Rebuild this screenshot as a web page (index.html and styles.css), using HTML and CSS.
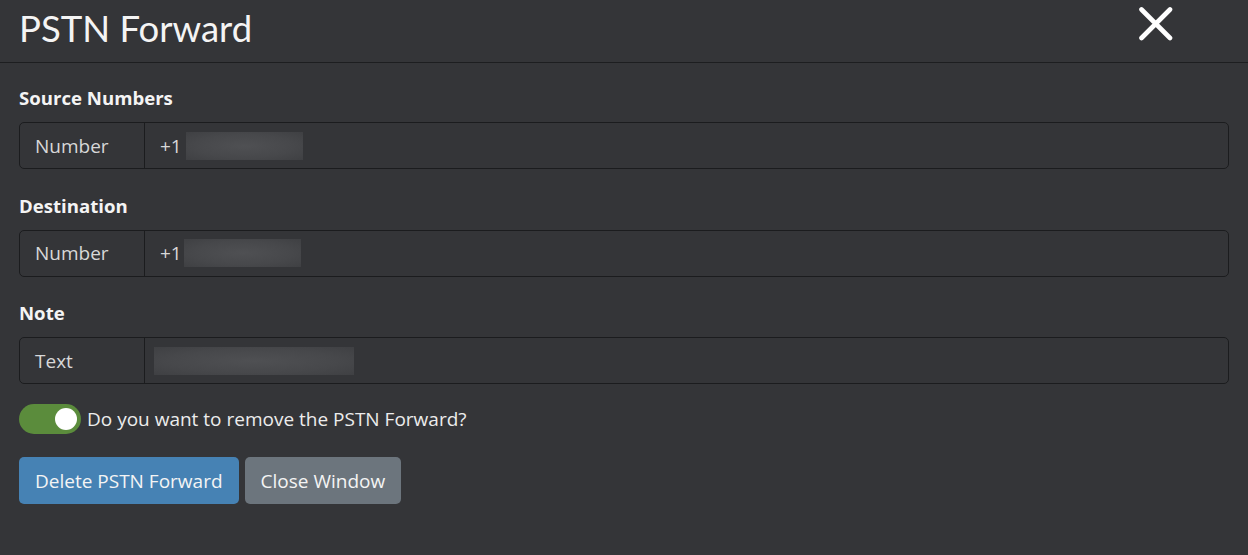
FILE: index.html
```html
<!DOCTYPE html>
<html lang="en">
<head>
<meta charset="utf-8">
<title>PSTN Forward</title>
<link rel="stylesheet" href="styles.css">
</head>
<body>
<div class="modal">
  <header class="modal-header">
    <h1 class="modal-title">PSTN Forward</h1>
    <button class="close-btn" aria-label="Close">
      <svg width="34" height="34" viewBox="0 0 34 34"><path d="M2.5 2.5 L31 31 M31 2.5 L2.5 31" stroke="#fff" stroke-width="4.6" stroke-linecap="round"/></svg>
    </button>
  </header>
  <main class="modal-body">
    <section class="field">
      <label class="field-label">Source Numbers</label>
      <div class="input-group">
        <span class="group-text">Number</span>
        <div class="group-input"><span>+1</span><span class="blur blur-num1"></span></div>
      </div>
    </section>
    <section class="field">
      <label class="field-label">Destination</label>
      <div class="input-group">
        <span class="group-text">Number</span>
        <div class="group-input"><span>+1</span><span class="blur blur-num2"></span></div>
      </div>
    </section>
    <section class="field">
      <label class="field-label">Note</label>
      <div class="input-group">
        <span class="group-text">Text</span>
        <div class="group-input"><span class="blur blur-text"></span></div>
      </div>
    </section>
    <div class="switch-row">
      <span class="switch"><span class="knob"></span></span>
      <span class="switch-label">Do you want to remove the PSTN Forward?</span>
    </div>
    <div class="actions">
      <button class="btn btn-primary">Delete PSTN Forward</button>
      <button class="btn btn-secondary">Close Window</button>
    </div>
  </main>
</div>
</body>
</html>
```
FILE: styles.css
```css
* { box-sizing: border-box; }
html, body {
  margin: 0;
  background: #343538;
  color: #ececec;
  font-family: "Open Sans", "Noto Sans", sans-serif;
}
.modal { width: 1248px; height: 555px; }
.modal-header {
  height: 63px;
  display: flex;
  align-items: center;
  justify-content: space-between;
  padding: 0 75px 0 19px;
  border-bottom: 1px solid #1d1e20;
}
.modal-title {
  margin: 0;
  font-family: "Lato", "Open Sans", sans-serif;
  font-size: 36.5px;
  font-weight: 400;
  color: #f4f4f4;
  line-height: 1;
  margin-top: -6px;
}
.close-btn {
  background: none;
  border: 0;
  padding: 0;
  margin-top: -15px;
  width: 34px;
  height: 34px;
  cursor: pointer;
}
.modal-body {
  padding: 23px 19px 0 19px;
}
.field + .field { margin-top: 24.5px; }
.field-label {
  display: block;
  font-weight: 700;
  font-size: 18.6px;
  line-height: 24px;
  margin-bottom: 12px;
  color: #f4f4f4;
}
.input-group {
  display: flex;
  height: 47px;
  border: 1px solid #1b1c1e;
  border-radius: 5px;
  font-size: 19px;
}
.group-text {
  width: 125px;
  flex: none;
  display: flex;
  align-items: center;
  padding-left: 15px;
  border-right: 1px solid #1b1c1e;
  color: #d8d8d8;
}
.group-input {
  flex: 1;
  display: flex;
  align-items: center;
  padding-left: 15px;
  color: #d8d8d8;
}
.blur {
  display: inline-block;
  height: 28px;
  background: radial-gradient(ellipse at center, #4f5053 0%, #47484b 60%, #3f4043 100%);
}
.blur-num1 { width: 117px; margin-left: 4px; }
.blur-num2 { width: 117px; margin-left: 2px; }
.blur-text { width: 200px; margin-left: -6px; }
.switch-row {
  display: flex;
  align-items: center;
  margin-top: 20px;
  gap: 6px;
  height: 30px;
}
.switch {
  width: 62px;
  height: 30px;
  border-radius: 15px;
  background: #5b8c3c;
  position: relative;
  flex: none;
}
.knob {
  position: absolute;
  right: 4px;
  top: 4px;
  width: 22px;
  height: 22px;
  border-radius: 50%;
  background: #fff;
}
.switch-label {
  font-size: 19px;
  color: #ececec;
}
.actions {
  display: flex;
  gap: 6px;
  margin-top: 23px;
}
.btn {
  height: 47px;
  border: 0;
  border-radius: 5px;
  padding: 0 16px;
  font-family: inherit;
  font-size: 19px;
  color: #f4f4f4;
}
.btn-primary { background: #4682b4; }
.btn-secondary { background: #6c757d; }
```
